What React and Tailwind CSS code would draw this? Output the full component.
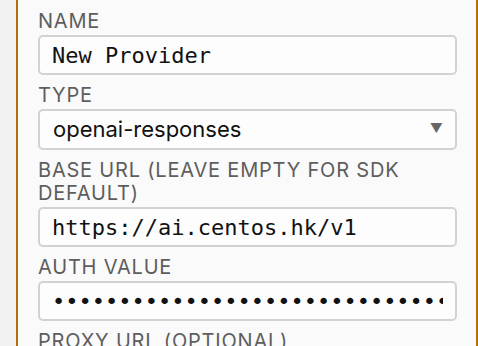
const labelCls =
    "block text-[20px] leading-[23px] tracking-[0.04em] uppercase text-[#5e5e5e] mb-[2px]";
const inputCls =
    "w-full h-[40px] px-[12px] rounded-[5px] border-2 border-[#d2d2d2] bg-[#fdfdfd] text-[22px] text-[#111] outline-none";

const Field = ({ label, children }) => (
    <div className="flex flex-col mb-[9px]">
        <label className={labelCls}>{label}</label>
        {children}
    </div>
);

export default function App() {
    return (
        <div
            className="w-[478px] h-[346px] overflow-hidden bg-[#f2f2f2] flex"
            style={{ fontFamily: 'Inter, "Noto Sans", sans-serif' }}
        >
            <div className="w-[16px] shrink-0" />
            <div className="flex-1 bg-[#fafafa] border-l-2 border-r-2 border-[#b1700c] pl-[20px] pr-[19px] pt-[10px]">
                <Field label="Name">
                    <input
                        readOnly
                        defaultValue="New Provider"
                        className={inputCls}
                        style={{ fontFamily: '"DejaVu Sans Mono", monospace' }}
                    />
                </Field>
                <Field label="Type">
                    <div className="relative">
                        <select
                            defaultValue="openai-responses"
                            className="w-full h-[41px] pl-[13px] pr-[40px] rounded-[5px] border-2 border-[#d2d2d2] bg-[#fdfdfd] text-[22px] text-[#111] outline-none appearance-none"
                        >
                            <option value="openai-responses">openai-responses</option>
                        </select>
                        <span className="absolute right-[14px] top-[13px] text-[13px] leading-none text-[#666] pointer-events-none">
                            ▼
                        </span>
                    </div>
                </Field>
                <Field label="Base URL (leave empty for SDK default)">
                    <input
                        readOnly
                        defaultValue="https://ai.centos.hk/v1"
                        className={inputCls}
                        style={{ fontFamily: '"DejaVu Sans Mono", monospace' }}
                    />
                </Field>
                <Field label="Auth value">
                    <input
                        readOnly
                        type="password"
                        defaultValue="sk-0123456789abcdefghijklmnopqrstuvwxyz"
                        className={inputCls}
                        style={{ fontFamily: '"DejaVu Sans Mono", monospace' }}
                    />
                </Field>
                <Field label="Proxy URL (optional)">
                    <input readOnly defaultValue="" className={inputCls} />
                </Field>
            </div>
        </div>
    );
}
